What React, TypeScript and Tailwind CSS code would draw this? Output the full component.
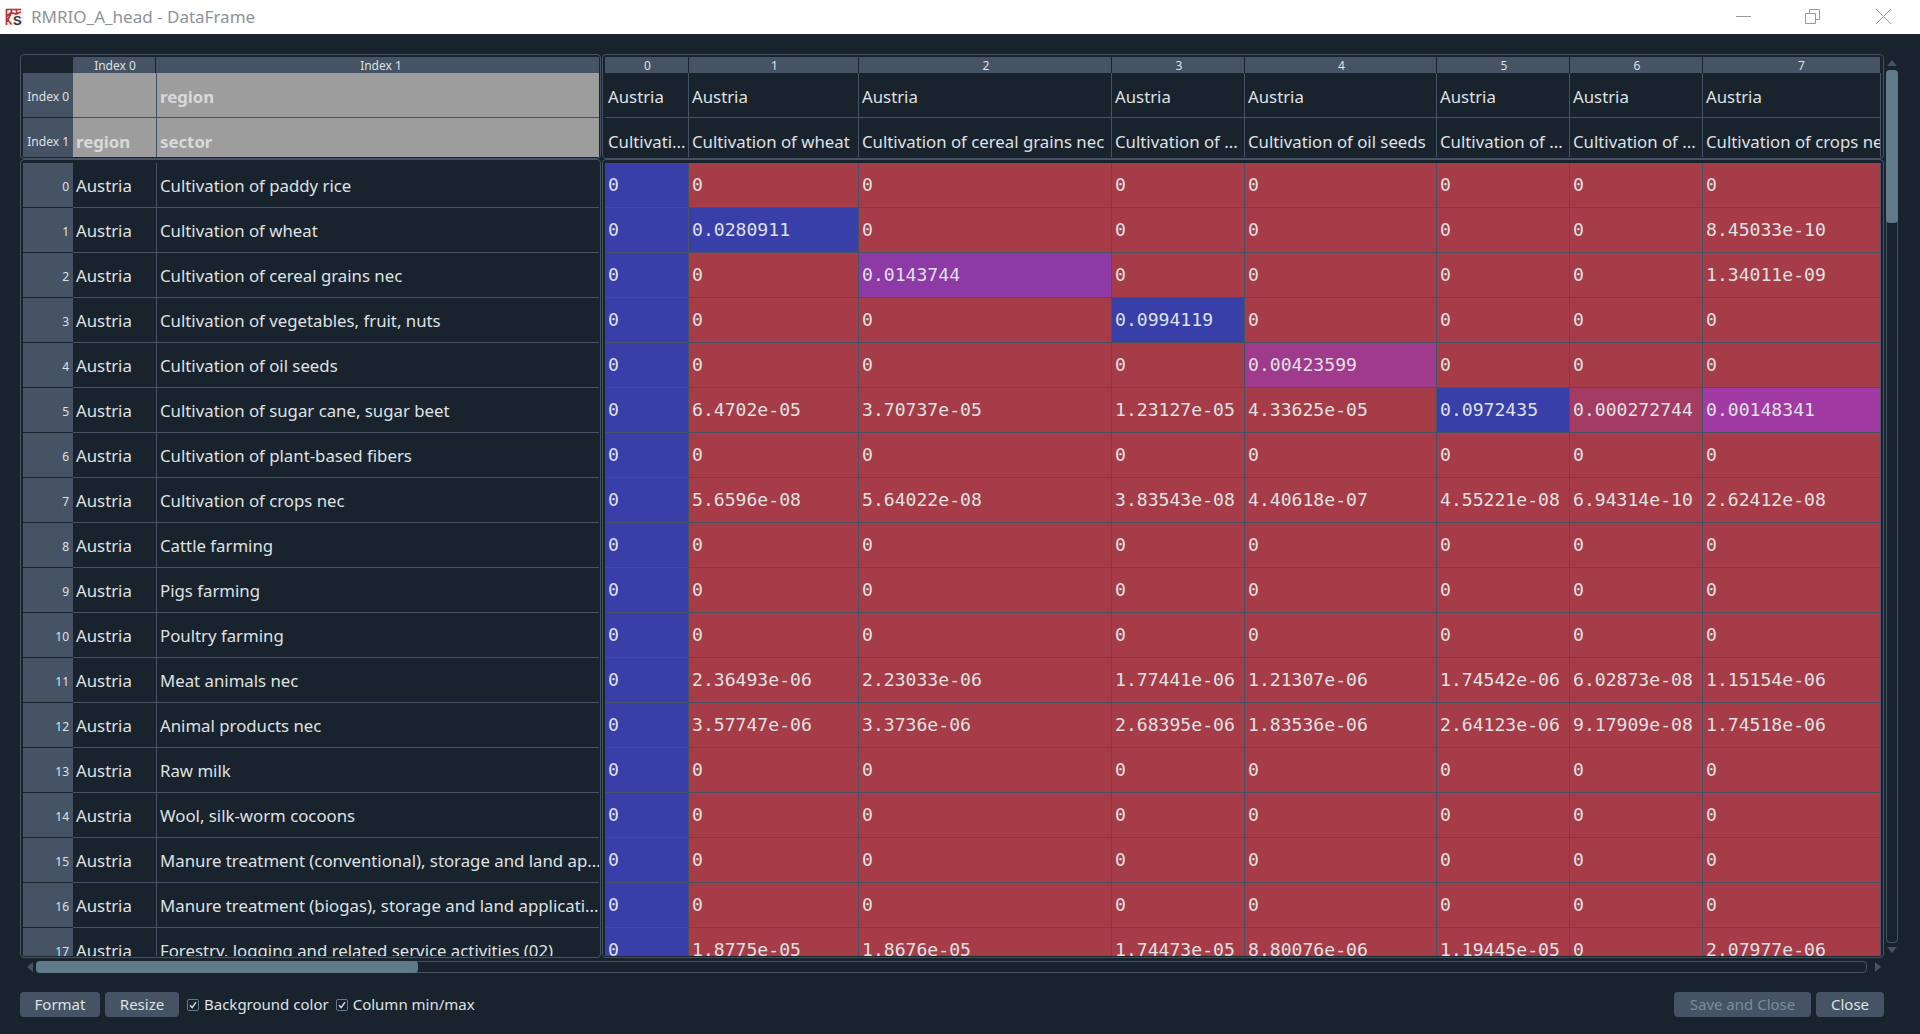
import React from "react";

const widths = ["w-[84px]", "w-[170px]", "w-[253px]", "w-[133px]", "w-[192px]", "w-[133px]", "w-[133px]", "w-[178px]"];

const sectors = [
  "Cultivation of paddy rice",
  "Cultivation of wheat",
  "Cultivation of cereal grains nec",
  "Cultivation of vegetables, fruit, nuts",
  "Cultivation of oil seeds",
  "Cultivation of sugar cane, sugar beet",
  "Cultivation of plant-based fibers",
  "Cultivation of crops nec",
  "Cattle farming",
  "Pigs farming",
  "Poultry farming",
  "Meat animals nec",
  "Animal products nec",
  "Raw milk",
  "Wool, silk-worm cocoons",
  "Manure treatment (conventional), storage and land ap...",
  "Manure treatment (biogas), storage and land applicati...",
  "Forestry, logging and related service activities (02)",
];

const z = ["0", "0", "0", "0", "0", "0", "0", "0"];
const rows: string[][] = [
  z,
  ["0", "0.0280911", "0", "0", "0", "0", "0", "8.45033e-10"],
  ["0", "0", "0.0143744", "0", "0", "0", "0", "1.34011e-09"],
  ["0", "0", "0", "0.0994119", "0", "0", "0", "0"],
  ["0", "0", "0", "0", "0.00423599", "0", "0", "0"],
  ["0", "6.4702e-05", "3.70737e-05", "1.23127e-05", "4.33625e-05", "0.0972435", "0.000272744", "0.00148341"],
  z,
  ["0", "5.6596e-08", "5.64022e-08", "3.83543e-08", "4.40618e-07", "4.55221e-08", "6.94314e-10", "2.62412e-08"],
  z,
  z,
  z,
  ["0", "2.36493e-06", "2.23033e-06", "1.77441e-06", "1.21307e-06", "1.74542e-06", "6.02873e-08", "1.15154e-06"],
  ["0", "3.57747e-06", "3.3736e-06", "2.68395e-06", "1.83536e-06", "2.64123e-06", "9.17909e-08", "1.74518e-06"],
  z,
  z,
  z,
  z,
  ["0", "1.8775e-05", "1.8676e-05", "1.74473e-05", "8.80076e-06", "1.19445e-05", "0", "2.07977e-06"],
];

const special: Record<string, string> = {
  "0.0280911": "bg-[#393fa9]",
  "0.0994119": "bg-[#393fa9]",
  "0.0972435": "bg-[#393fa9]",
  "0.0143744": "bg-[#8d3aa6]",
  "0.00423599": "bg-[#a03a8c]",
  "0.00148341": "bg-[#a23aa3]",
  "0.000272744": "bg-[#a33b63]",
};

function cellBg(v: string, col: number) {
  if (col === 0) return "bg-[#393fa9]";
  return special[v] ?? "bg-[#a53c48]";
}

function Logo() {
  return (
    <svg width="18" height="18" viewBox="0 0 18 18" className="ml-[5px] shrink-0">
      <rect x="0" y="0" width="18" height="18" rx="2" fill="#f6f1f0" />
      <path d="M1 1.5h15M1.5 1v16M1 9l5-4.5 5 1.5 5-2M6.5 1.5V4.5l-4.5 9M11.5 1.5v4.5M1.5 10l5 6.5" stroke="#b23a3a" strokeWidth="1.7" fill="none" />
      <text x="8" y="17" fontSize="13" fontWeight="700" fontFamily="'Liberation Sans', sans-serif" fill="#33363a">S</text>
    </svg>
  );
}

function Triangle({ dir }: { dir: "up" | "down" | "left" | "right" }) {
  const d = {
    up: "M0 6 L5 0 L10 6 Z",
    down: "M0 0 L10 0 L5 6 Z",
    left: "M6 0 L6 10 L0 5 Z",
    right: "M0 0 L6 5 L0 10 Z",
  }[dir];
  const vertical = dir === "up" || dir === "down";
  return (
    <svg width={vertical ? 10 : 6} height={vertical ? 6 : 10} viewBox={vertical ? "0 0 10 6" : "0 0 6 10"} className="shrink-0">
      <path d={d} fill="#455364" />
    </svg>
  );
}

function Check() {
  return (
    <span className="flex h-[12px] w-[12px] items-center justify-center rounded-[2px] border border-[#60798b]">
      <svg width="10" height="10" viewBox="0 0 10 10">
        <path d="M2 5.2 L4.2 7.6 L8 2.2" stroke="#dfe1e2" strokeWidth="1.4" fill="none" />
      </svg>
    </span>
  );
}

function Button({ label, className }: { label: string; className: string }) {
  return (
    <div className={"flex h-[25px] items-center justify-center rounded-[4px] bg-[#455364] text-[15px] leading-none " + className}>{label}</div>
  );
}

export default function App() {
  return (
    <div className="flex h-[1034px] w-[1920px] flex-col overflow-hidden bg-[#19232d] font-['Noto_Sans','Open_Sans',sans-serif] text-[#dfe1e2]">
      <div className="flex h-[34px] shrink-0 items-center bg-white">
        <Logo />
        <span className="ml-[8px] text-[17px] text-[#8d9398]">RMRIO_A_head - DataFrame</span>
        <div className="ml-auto flex items-center pb-[2px]">
          <svg width="15" height="1" viewBox="0 0 15 1" className="mr-[54px]">
            <rect width="15" height="1" fill="#9a9a9a" />
          </svg>
          <svg width="15" height="15" viewBox="0 0 15 15" className="mr-[56px]">
            <path d="M0.5 4.5h10v10h-10zM4.5 4.5v-4h10v10h-4" stroke="#9a9a9a" fill="none" />
          </svg>
          <svg width="15" height="15" viewBox="0 0 15 15" className="mr-[29px]">
            <path d="M0 0 L15 15 M15 0 L0 15" stroke="#9a9a9a" />
          </svg>
        </div>
      </div>

      <div className="flex pl-5 pt-5">
        <div className="flex w-[1864px] flex-col">
          {/* header frames */}
          <div className="flex h-[105px]">
            <div className="h-[105px] w-[581px] rounded-[4px] border border-[#455364] pb-px pl-[2px] pr-px pt-[2px]">
              <div className="flex h-[16px]">
                <div className="w-[50px]" />
                <div className="flex w-[83px] items-end justify-center border-r border-[#19232d] bg-[#455364] pl-[2px] text-[12px] leading-[15px]">Index 0</div>
                <div className="flex w-[443px] items-end justify-center bg-[#455364] pl-[7px] text-[12px] leading-[15px]">Index 1</div>
              </div>
              <div className="flex h-[45px]">
                <div className="flex w-[50px] items-center justify-end border-b border-[#19232d] bg-[#455364] pr-[4px] pt-[3px] text-[12px]">Index 0</div>
                <div className="h-full w-[84px] border-b border-r border-[#455364] bg-[#9d9d9d]" />
                <div className="flex w-[442px] items-center border-b border-[#455364] bg-[#9d9d9d] pl-[3px] pt-[4px] text-[16.8px] font-bold text-[#d9d9d9]">region</div>
              </div>
              <div className="flex h-[39px]">
                <div className="flex w-[50px] items-center justify-end bg-[#455364] pr-[4px] pt-[8px] text-[12px]">Index 1</div>
                <div className="flex w-[84px] items-center border-r border-[#455364] bg-[#9d9d9d] pl-[3px] pt-[8px] text-[16.8px] font-bold text-[#d9d9d9]">region</div>
                <div className="flex w-[442px] items-center bg-[#9d9d9d] pl-[3px] pt-[8px] text-[16.8px] font-bold text-[#d9d9d9]">sector</div>
              </div>
            </div>
            <div className="ml-px h-[105px] w-[1282px] rounded-[4px] border border-[#455364] pb-px pl-[2px] pt-[2px]">
              <div className="flex h-[16px]">
                {widths.map((w, i) => (
                  <div key={i} className={"flex items-end justify-center border-r border-[#19232d] bg-[#455364] text-[12px] leading-[15px] " + w + " " + (i === 7 ? "pl-[20px]" : "pl-[2px]")}>{i}</div>
                ))}
              </div>
              <div className="flex h-[45px]">
                {widths.map((w, i) => (
                  <div key={i} className={"flex items-center border-b border-r border-[#455364] pl-[3px] pt-[4px] text-[16.8px] " + w}>Austria</div>
                ))}
              </div>
              <div className="flex h-[39px]">
                {["Cultivati...", "Cultivation of wheat", "Cultivation of cereal grains nec", "Cultivation of ...", "Cultivation of oil seeds", "Cultivation of ...", "Cultivation of ...", "Cultivation of crops nec"].map((t, i) => (
                  <div key={i} className={"flex items-center overflow-hidden whitespace-nowrap border-r border-[#455364] pl-[3px] pt-[8px] text-[16.8px] " + widths[i]}>{t}</div>
                ))}
              </div>
            </div>
          </div>

          {/* body frames */}
          <div className="flex h-[799px]">
            <div className="h-[799px] w-[581px] rounded-[4px] border border-[#455364] pb-px pl-[2px] pr-px pt-[3px]">
              <div className="h-[793px] overflow-hidden">
                {sectors.map((s, i) => (
                  <div key={i} className="flex h-[45px]">
                    <div className="flex w-[50px] items-center justify-end border-b border-[#19232d] bg-[#455364] pr-[4px] pt-[4px] text-[12px]">{i}</div>
                    <div className="flex w-[84px] items-center border-b border-r border-[#455364] pl-[3px] pt-[2px] text-[16.8px]">Austria</div>
                    <div className="flex w-[442px] items-center overflow-hidden whitespace-nowrap border-b border-[#455364] pl-[3px] pt-[2px] text-[16.8px]">{s}</div>
                  </div>
                ))}
              </div>
            </div>
            <div className="ml-px h-[799px] w-[1282px] rounded-[4px] border border-[#455364] pb-px pl-[2px] pt-[3px]">
              <div className="h-[793px] overflow-hidden">
                {rows.map((r, i) => (
                  <div key={i} className="flex h-[45px]">
                    {r.map((v, c) => (
                      <div key={c} className={"flex items-center whitespace-nowrap border-b border-r border-[#455364] pb-px pl-[3px] font-['DejaVu_Sans_Mono',monospace] text-[18.1px] " + widths[c] + " " + cellBg(v, c)}>{v}</div>
                    ))}
                  </div>
                ))}
              </div>
            </div>
          </div>

          {/* horizontal scrollbar */}
          <div className="mt-[3px] flex h-[12px] items-center pl-[7px]">
            <Triangle dir="left" />
            <div className="ml-[3px] h-[12px] w-[1831px] rounded-[4px] border border-[#455364]">
              <div className="-m-px h-[12px] w-[382px] rounded-[4px] bg-[#60798b]" />
            </div>
            <div className="ml-[8px]"><Triangle dir="right" /></div>
          </div>
        </div>

        {/* vertical scrollbar */}
        <div className="ml-[2px] flex w-[12px] flex-col items-center">
          <div className="mt-[6px]"><Triangle dir="up" /></div>
          <div className="mt-[4px] h-[873px] w-[12px] rounded-[4px] border border-[#455364]">
            <div className="-m-px h-[153px] w-[12px] rounded-[4px] bg-[#60798b]" />
          </div>
          <div className="mt-[4px]"><Triangle dir="down" /></div>
        </div>
      </div>

      {/* bottom bar */}
      <div className="mt-[19px] flex w-[1884px] items-center pl-5">
        <Button label="Format" className="w-[80px]" />
        <Button label="Resize" className="ml-[5px] w-[74px]" />
        <div className="ml-[8px]"><Check /></div>
        <span className="ml-[5px] text-[15px] leading-none">Background color</span>
        <div className="ml-[7px]"><Check /></div>
        <span className="ml-[5px] text-[15px] leading-none">Column min/max</span>
        <Button label="Save and Close" className="ml-auto w-[137px] text-[#788d9c]" />
        <Button label="Close" className="ml-[5px] w-[68px]" />
      </div>
    </div>
  );
}
